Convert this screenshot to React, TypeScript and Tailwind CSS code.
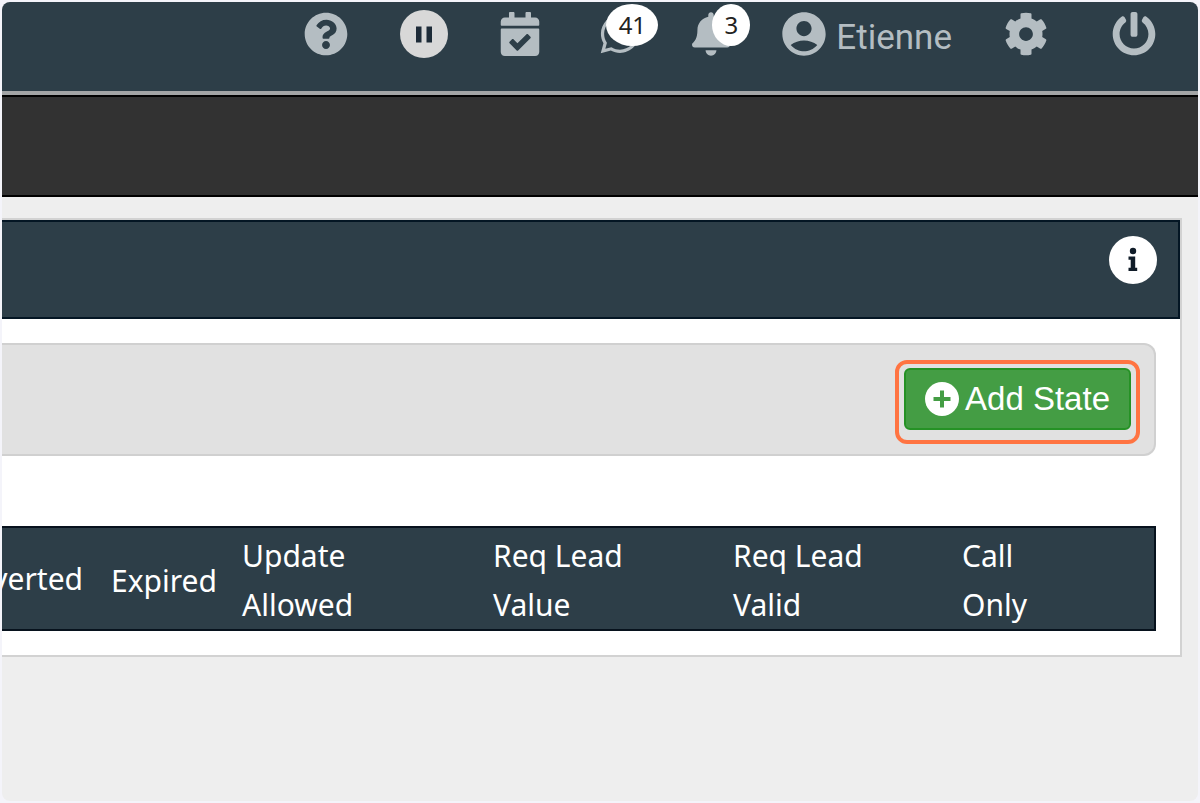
import { ReactNode } from "react";
import { FaBell, FaCalendarCheck, FaCog, FaPowerOff, FaQuestionCircle, FaWhatsapp } from "react-icons/fa";
import { MdAccountCircle } from "react-icons/md";

interface Column {
  lines: string[];
  width: string;
}

const columns: Column[] = [
  { lines: ["Expired"], width: "w-[131px]" },
  { lines: ["Update", "Allowed"], width: "w-[251px]" },
  { lines: ["Req Lead", "Value"], width: "w-[240px]" },
  { lines: ["Req Lead", "Valid"], width: "w-[229px]" },
  { lines: ["Call", "Only"], width: "" },
];

function PauseIcon() {
  return (
    <svg viewBox="0 0 48 48" className="size-12">
      <circle cx="24" cy="24" r="24" fill="#d8d8d8" />
      <path d="M16 16.5h5.5v16H16zM26.500 16.500h5.500v16h-5.500z" fill="#1d2b38" />
    </svg>
  );
}

function InfoIcon() {
  return (
    <svg viewBox="0 0 48 48" className="size-12">
      <circle cx="24" cy="24" r="24" fill="#fff" />
      <circle cx="24" cy="15" r="3.2" fill="#101c28" />
      <path d="M19.500 20.500h6.700v11.200h2v3.300h-8.700v-3.300h2.200v-7.900h-2.200z" fill="#101c28" />
    </svg>
  );
}

function PlusIcon() {
  return (
    <svg viewBox="0 0 34 34" className="size-[34px]">
      <circle cx="17" cy="17" r="17" fill="#fff" />
      <path d="M17 8.500v17M8.500 17h17" stroke="#449d44" strokeWidth="4" />
    </svg>
  );
}

// Counter that sits over the top right of an icon
function Badge({ className, children }: { className: string; children: ReactNode }) {
  return (
    <span
      className={`absolute -top-2 flex h-[42px] items-center justify-center rounded-[50%] bg-white font-['Noto_Sans',sans-serif] text-2xl text-[#222] ${className}`}
    >
      {children}
    </span>
  );
}

function TopBar() {
  return (
    <header className="flex h-[93px] items-start justify-end gap-[52px] border-b-4 border-[#a3a5a6] bg-[#2d3e48] pt-2 pr-[42px] text-[#b4bdc2]">
      <button aria-label="Help" className="flex h-12 items-center">
        <FaQuestionCircle className="size-11" />
      </button>
      <button aria-label="Pause" className="flex h-12 items-center">
        <PauseIcon />
      </button>
      <button aria-label="Calendar" className="flex h-12 items-center">
        <FaCalendarCheck className="h-11 w-10" />
      </button>
      <button aria-label="Messages" className="flex h-12 items-center pl-2">
        <span className="relative">
          <FaWhatsapp className="h-11 w-10" />
          <Badge className="left-[6px] w-[52px]">41</Badge>
        </span>
      </button>
      <button aria-label="Notifications" className="flex h-12 items-center">
        <span className="relative">
          <FaBell className="h-11 w-[38px]" />
          <Badge className="left-5 w-[38px]">3</Badge>
        </span>
      </button>
      <button className="flex h-12 items-center gap-[10px]">
        <MdAccountCircle className="-mx-1 size-[52px]" />
        <span className="pt-2 font-[Roboto,sans-serif] text-[35px] leading-12">Etienne</span>
      </button>
      <button aria-label="Settings" className="flex h-12 items-center">
        <FaCog className="size-11" />
      </button>
      <button aria-label="Log out" className="flex h-12 items-center pl-3">
        <FaPowerOff className="size-11" />
      </button>
    </header>
  );
}

function StatesTable() {
  return (
    <table className="w-full table-fixed border-2 border-l-0 border-[#07121d] bg-[#2d3e48] text-left font-['Noto_Sans',sans-serif] text-[30px] leading-[49px] text-white">
      <thead>
        <tr>
          <th className="w-[95px] p-0 font-normal">
            <span className="flex justify-end pr-[14px]">verted</span>
          </th>
          {columns.map((col) => (
            <th key={col.lines.join(" ")} className={`${col.width} px-[14px] pt-[3px] pb-0 font-normal`}>
              {col.lines.map((line) => (
                <span key={line} className="block whitespace-nowrap">
                  {line}
                </span>
              ))}
            </th>
          ))}
        </tr>
      </thead>
    </table>
  );
}

export default function App() {
  return (
    <div className="flex min-h-screen bg-[#f4f4fa] p-[2px]">
      <div className="min-w-0 flex-1 overflow-hidden rounded-lg bg-[#eeeeee]">
        <TopBar />
        <div className="h-[102px] border-y-2 border-black bg-[#323232]" />

        <main className="pt-[21px] pr-4">
          <section className="border-2 border-l-0 border-[#d2d2d2] bg-white">
            <div className="flex h-[99px] items-start justify-end border-2 border-l-0 border-[#041624] bg-[#2d3e48] pt-[14px] pr-[21px]">
              <button aria-label="Information">
                <InfoIcon />
              </button>
            </div>

            <div className="pt-6 pr-6 pb-6">
              <div className="mb-[70px] flex justify-end rounded-r-xl border-2 border-l-0 border-[#d0d0d0] bg-[#e1e1e1] pt-[23px] pr-[23px] pb-6">
                <div className="relative">
                  <button className="flex h-[62px] items-center gap-[6px] rounded-md border-2 border-[#259225] bg-[#449d44] px-[19px] font-['Liberation_Sans',sans-serif] text-[33px] text-white">
                    <PlusIcon />
                    Add State
                  </button>
                  <div className="pointer-events-none absolute -inset-x-[9px] -top-2 -bottom-[14px] rounded-xl border-4 border-[#ff7442]" />
                </div>
              </div>
              <StatesTable />
            </div>
          </section>
        </main>
      </div>
    </div>
  );
}
